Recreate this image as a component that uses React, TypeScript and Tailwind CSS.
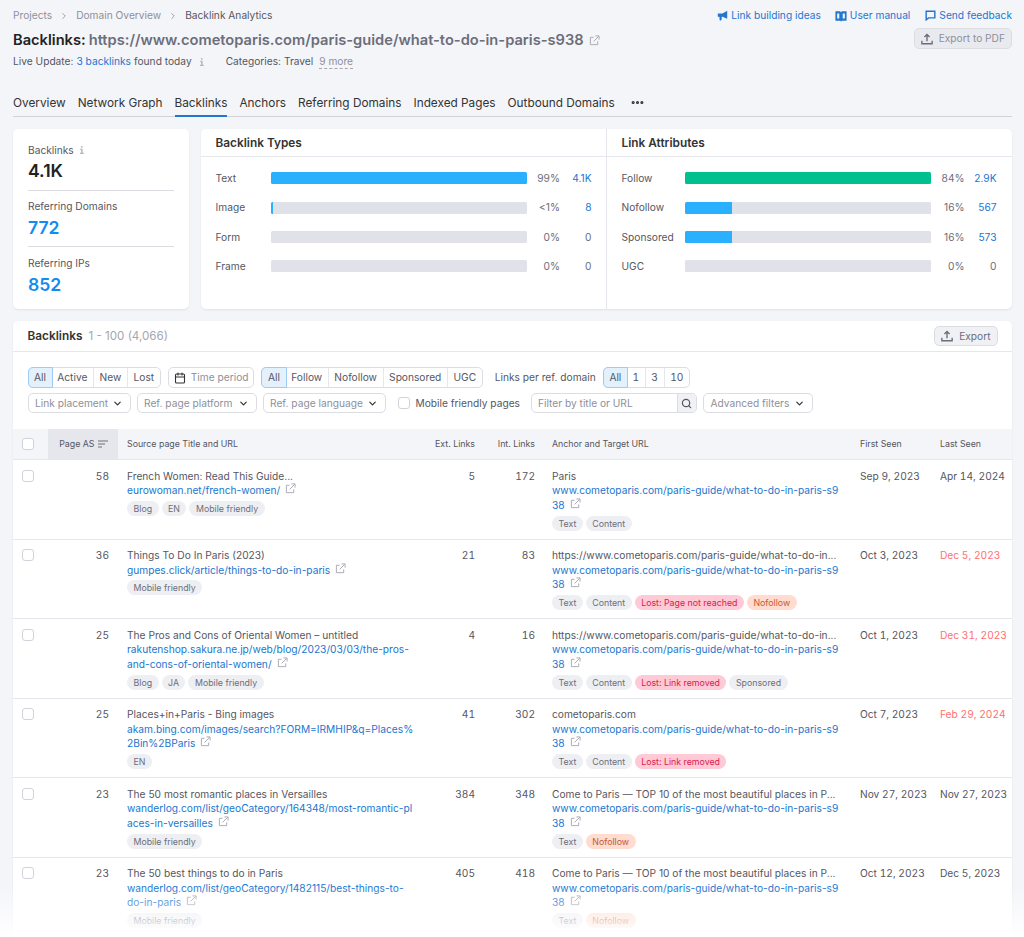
import { ChevronDown, ChevronRight, Calendar, Search, MoreHorizontal } from 'lucide-react';

type Chip = { label: string; tone?: 'gray' | 'red' | 'orange' };
type Row = {
  as: number;
  title: string;
  url: string;
  tags: string[];
  ext: number;
  int: number;
  anchor: string;
  chips: Chip[];
  first: string;
  last: string;
  lostDate?: boolean;
};

const TARGET = 'www.cometoparis.com/paris-guide/what-to-do-in-paris-s9\n38';
const LONG = 'https://www.cometoparis.com/paris-guide/what-to-do-in...';
const TOP = 'Come to Paris — TOP 10 of the most beautiful places in P...';

const rows: Row[] = [
  { as: 58, title: 'French Women: Read This Guide...', url: 'eurowoman.net/french-women/', tags: ['Blog', 'EN', 'Mobile friendly'], ext: 5, int: 172, anchor: 'Paris', chips: [{ label: 'Text' }, { label: 'Content' }], first: 'Sep 9, 2023', last: 'Apr 14, 2024' },
  { as: 36, title: 'Things To Do In Paris (2023)', url: 'gumpes.click/article/things-to-do-in-paris', tags: ['Mobile friendly'], ext: 21, int: 83, anchor: LONG, chips: [{ label: 'Text' }, { label: 'Content' }, { label: 'Lost: Page not reached', tone: 'red' }, { label: 'Nofollow', tone: 'orange' }], first: 'Oct 3, 2023', last: 'Dec 5, 2023', lostDate: true },
  { as: 25, title: 'The Pros and Cons of Oriental Women – untitled', url: 'rakutenshop.sakura.ne.jp/web/blog/2023/03/03/the-pros-\nand-cons-of-oriental-women/', tags: ['Blog', 'JA', 'Mobile friendly'], ext: 4, int: 16, anchor: LONG, chips: [{ label: 'Text' }, { label: 'Content' }, { label: 'Lost: Link removed', tone: 'red' }, { label: 'Sponsored' }], first: 'Oct 1, 2023', last: 'Dec 31, 2023', lostDate: true },
  { as: 25, title: 'Places+in+Paris - Bing images', url: 'akam.bing.com/images/search?FORM=IRMHIP&q=Places%\n2Bin%2BParis', tags: ['EN'], ext: 41, int: 302, anchor: 'cometoparis.com', chips: [{ label: 'Text' }, { label: 'Content' }, { label: 'Lost: Link removed', tone: 'red' }], first: 'Oct 7, 2023', last: 'Feb 29, 2024', lostDate: true },
  { as: 23, title: 'The 50 most romantic places in Versailles', url: 'wanderlog.com/list/geoCategory/164348/most-romantic-pl\naces-in-versailles', tags: ['Mobile friendly'], ext: 384, int: 348, anchor: TOP, chips: [{ label: 'Text' }, { label: 'Nofollow', tone: 'orange' }], first: 'Nov 27, 2023', last: 'Nov 27, 2023' },
  { as: 23, title: 'The 50 best things to do in Paris', url: 'wanderlog.com/list/geoCategory/1482115/best-things-to-\ndo-in-paris', tags: ['Mobile friendly'], ext: 405, int: 418, anchor: TOP, chips: [{ label: 'Text' }, { label: 'Nofollow', tone: 'orange' }], first: 'Oct 12, 2023', last: 'Dec 5, 2023' },
];

const types = [
  { label: 'Text', fill: 100, pct: '99%', count: '4.1K', blue: true },
  { label: 'Image', fill: 1, pct: '<1%', count: '8', blue: true },
  { label: 'Form', fill: 0, pct: '0%', count: '0', blue: false },
  { label: 'Frame', fill: 0, pct: '0%', count: '0', blue: false },
];

const attrs = [
  { label: 'Follow', fill: 100, pct: '84%', count: '2.9K', blue: true, green: true },
  { label: 'Nofollow', fill: 19, pct: '16%', count: '567', blue: true, green: false },
  { label: 'Sponsored', fill: 19, pct: '16%', count: '573', blue: true, green: false },
  { label: 'UGC', fill: 0, pct: '0%', count: '0', blue: false, green: false },
];

function LinkIcon() {
  return (
    <svg viewBox="0 0 12 12" className="inline-block w-[11px] h-[11px] ml-[5px] align-[0px] text-[#a4a6b0]" fill="none" stroke="currentColor" strokeWidth="1">
      <path d="M5 2.5H1.5v8h8V7" />
      <path d="M5 7l5.5-5.5M7 1h4v4" />
    </svg>
  );
}

function InfoIcon() {
  return (
    <svg viewBox="0 0 8 12" className="w-[6px] h-[10px] text-[#b4b6c0]" fill="currentColor">
      <rect x="2.6" y="0.8" width="2.2" height="2" />
      <path d="M1.4 4.4h3.4v5.4h1.6v1.4H1.2V9.8h1.6V5.8H1.4z" />
    </svg>
  );
}

function UploadIcon() {
  return (
    <svg viewBox="0 0 14 14" className="w-[12px] h-[12px] text-[#6c6e79]" fill="none" stroke="currentColor" strokeWidth="1.6">
      <path d="M7 9.5V2M4 4.6L7 1.6l3 3M1 9v3.5h12V9" />
    </svg>
  );
}

function Tag({ chip }: { chip: Chip }) {
  const tone =
    chip.tone === 'red'
      ? 'bg-[#ffc9d5] text-[#d9204f]'
      : chip.tone === 'orange'
        ? 'bg-[#ffdccf] text-[#bf5a35]'
        : 'bg-[#eeeff3] text-[#6c6e79]';
  return <span className={`h-[15px] leading-[15px] rounded-full px-[6.5px] text-[8.8px] whitespace-nowrap ${tone}`}>{chip.label}</span>;
}

function Checkbox({ className = '' }: { className?: string }) {
  return <span className={`block w-[12px] h-[12px] rounded-[3px] border border-[#d1d2db] bg-white ${className}`} />;
}

function Segments({ items }: { items: string[] }) {
  return (
    <div className="flex h-[21px] rounded-[5px] border border-[#dcdde3] bg-white text-[10.2px] text-[#55565f] tabular-nums">
      {items.map((it, i) => (
        <span
          key={it}
          className={
            i === 0
              ? '-m-px h-[21px] leading-[19px] px-[5.6px] rounded-l-[5px] border border-[#9ccbf3] bg-[#e3f1fd] text-[#55565f]'
              : `leading-[19px] px-[5.6px] ${i > 1 ? 'border-l border-[#e6e7ec]' : ''}`
          }
        >
          {it}
        </span>
      ))}
    </div>
  );
}

function Select({ label, width }: { label: string; width: string }) {
  return (
    <div className={`flex items-center justify-between h-[20px] rounded-[5px] border border-[#dcdde3] bg-white px-[6.5px] text-[10.2px] text-[#8e9099] ${width}`}>
      <span className="whitespace-nowrap">{label}</span>
      <ChevronDown size={11} strokeWidth={2.6} className="text-[#333]" />
    </div>
  );
}

function Bars({ title, items, labelWidth, barClass, pctClass, border }: { title: string; items: typeof attrs; labelWidth: string; barClass: string; pctClass: string; border?: boolean }) {
  return (
    <div className={`flex-1 min-w-0 ${border ? 'border-l border-[#e6e7ec]' : ''}`}>
      <div className="h-[28px] leading-[29px] px-[14.5px] border-b border-[#e6e7ec] text-[11.85px] font-semibold text-[#333]">{title}</div>
      <div className="px-[14.5px] pt-[6.5px] flex flex-col">
        {items.map(r => (
          <div key={r.label} className="flex items-center h-[29.4px] text-[10.2px]">
            <span className={`${labelWidth} text-[#55565f]`}>{r.label}</span>
            <div className={`${barClass} shrink-0 h-[12px] rounded-[1.5px] bg-[#e0e1e9] overflow-hidden`}>
              <div className={`h-full ${r.green ? 'bg-[#00c08f]' : 'bg-[#2bafff]'}`} style={{ width: `${r.fill}%` }} />
            </div>
            <span className={`${pctClass} text-right text-[#6c6e79]`}>{r.pct}</span>
            <span className={`w-[32px] text-right ${r.blue ? 'text-[#2176cf]' : 'text-[#6c6e79]'}`}>{r.count}</span>
          </div>
        ))}
      </div>
    </div>
  );
}

const GRID = 'grid grid-cols-[35px_70px_309px_57px_60px_307px_80px_81px]';

export default function App() {
  return (
    <div
      className="relative h-[937px] overflow-hidden bg-[#f4f5f9] text-[#333] text-[10.2px] leading-[14.67px]"
      style={{ fontFamily: 'Inter, "Liberation Sans", sans-serif' }}
    >
      <div className="pl-[13px] pr-[12px]">
        {/* header */}
        <div className="flex justify-between">
          <div className="min-w-0">
            <div className="flex items-center h-[15px] mt-[8px] text-[#6c6e79]">
              <span className="text-[#8e9099]">Projects</span>
              <ChevronRight size={10} className="mx-[7px] text-[#8e9099]" />
              <span className="text-[#8e9099]">Domain Overview</span>
              <ChevronRight size={10} className="mx-[7px] text-[#8e9099]" />
              <span className="text-[#55565f]">Backlink Analytics</span>
            </div>
            <div className="flex items-center h-[22px] mt-[6px] text-[14.67px] font-semibold whitespace-nowrap">
              <span className="text-[#222]">Backlinks:</span>
              <span className="ml-[3px] text-[#6c6e79]">https://www.cometoparis.com/paris-guide/what-to-do-in-paris-s938</span>
              <LinkIcon />
            </div>
            <div className="flex items-center h-[15px] mt-[3px] text-[#55565f]">
              <span>Live Update:</span>
              <span className="ml-[3px] text-[#2176cf]">3 backlinks</span>
              <span className="ml-[3px]">found today</span>
              <span className="ml-[7px]"><InfoIcon /></span>
              <span className="ml-[21px]">Categories: Travel</span>
              <span className="ml-[6px] text-[#8e9099] border-b border-dashed border-[#a4a6b0] leading-[14px]">9 more</span>
            </div>
          </div>
          <div className="flex flex-col items-end shrink-0">
            <div className="flex items-center h-[15px] mt-[8px] text-[#2176cf] whitespace-nowrap">
              <svg viewBox="0 0 14 14" className="w-[11px] h-[11px]" fill="currentColor">
                <path d="M13 1v10L7 8.5H6V12l-1 1.5H3.5L3 8.5H1v-4h6z" />
              </svg>
              <span className="ml-[3px]">Link building ideas</span>
              <svg viewBox="0 0 14 14" className="w-[12px] h-[12px] ml-[14px]">
                <path d="M0.5 1.5h5.5l1 1 1-1h5.5v11H8l-1 1-1-1H0.5z" fill="currentColor" />
                <path d="M2.5 4h2.5v6H2.5zM9 4h2.5v6H9z" fill="#f4f5f9" />
              </svg>
              <span className="ml-[3px]">User manual</span>
              <svg viewBox="0 0 14 14" className="w-[11px] h-[11px] ml-[15px]" fill="none" stroke="currentColor" strokeWidth="1.8">
                <path d="M1.5 1.5h11v8.5H4.5l-3 2.5z" />
              </svg>
              <span className="ml-[3px]">Send feedback</span>
            </div>
            <div className="flex items-center gap-[6px] h-[21px] mt-[5px] px-[6px] rounded-[5px] border border-[#dcdde3] bg-[#e9eaf0] text-[#8e9099]">
              <UploadIcon />
              <span className="whitespace-nowrap">Export to PDF</span>
            </div>
          </div>
        </div>

        {/* tabs */}
        <div className="flex gap-[12px] h-[25px] mt-[23px] border-b border-[#d1d2db] text-[11.8px] text-[#333]">
          {['Overview', 'Network Graph', 'Backlinks', 'Anchors', 'Referring Domains', 'Indexed Pages', 'Outbound Domains'].map(t => (
            <span key={t} className={`h-[25px] leading-[22px] whitespace-nowrap ${t === 'Backlinks' ? 'border-b-2 border-[#2176cf]' : ''}`}>{t}</span>
          ))}
          <MoreHorizontal size={15} strokeWidth={3} className="ml-[3px] mt-[3px] text-[#333]" />
        </div>

        {/* summary cards */}
        <div className="flex gap-[12px] mt-[12px] h-[180px]">
          <div className="w-[176px] shrink-0 rounded-[5px] bg-white shadow-[0_1px_2px_rgba(0,0,0,0.08)] px-[15px] pt-[14px]">
            <div className="flex items-center gap-[5px] text-[#55565f]">Backlinks <InfoIcon /></div>
            <div className="h-[25px] leading-[25px] text-[17.6px] font-semibold text-[#222]">4.1K</div>
            <div className="mt-[7px] border-t border-[#dcdde3] pt-[8px] text-[#55565f]">Referring Domains</div>
            <div className="h-[25px] leading-[30px] text-[17.6px] font-semibold text-[#118df0]">772</div>
            <div className="mt-[8px] border-t border-[#dcdde3] pt-[9px] text-[#55565f]">Referring IPs</div>
            <div className="h-[25px] leading-[28px] text-[17.6px] font-semibold text-[#118df0]">852</div>
          </div>
          <div className="flex flex-1 min-w-0 rounded-[5px] bg-white shadow-[0_1px_2px_rgba(0,0,0,0.08)]">
            <Bars title="Backlink Types" items={types.map(t => ({ ...t, green: false }))} labelWidth="w-[56px]" barClass="w-[256px]" pctClass="w-[33.5px]" />
            <Bars title="Link Attributes" items={attrs} labelWidth="w-[63.5px]" barClass="w-[246px]" pctClass="w-[33.5px]" border />
          </div>
        </div>

        {/* backlinks table */}
        <div className="mt-[12px] rounded-t-[5px] bg-white shadow-[0_1px_2px_rgba(0,0,0,0.08)]">
          <div className="flex items-center justify-between h-[31px] px-[14.5px] border-b border-[#e6e7ec]">
            <div className="flex items-center gap-[6px]">
              <span className="text-[11.85px] font-semibold text-[#333]">Backlinks</span>
              <span className="text-[11.6px] text-[#a4a6b0]">1 - 100 (4,066)</span>
            </div>
            <div className="flex items-center gap-[6px] h-[20px] px-[6px] rounded-[5px] border border-[#dcdde3] bg-[#f0f1f5] text-[#6c6e79]">
              <UploadIcon />
              <span>Export</span>
            </div>
          </div>

          <div className="px-[14.5px] pt-[15px] h-[77px]">
            <div className="flex items-center">
              <Segments items={['All', 'Active', 'New', 'Lost']} />
              <div className="flex items-center gap-[5px] h-[21px] ml-[7px] px-[5px] rounded-[5px] border border-[#dcdde3] text-[#8e9099] whitespace-nowrap">
                <Calendar size={12} strokeWidth={2.2} className="text-[#333]" />
                Time period
              </div>
              <div className="ml-[7px]"><Segments items={['All', 'Follow', 'Nofollow', 'Sponsored', 'UGC']} /></div>
              <span className="ml-[12px] text-[#55565f] whitespace-nowrap">Links per ref. domain</span>
              <div className="ml-[7px]"><Segments items={['All', '1', '3', '10']} /></div>
            </div>
            <div className="flex items-center gap-[6px] mt-[5px]">
              <Select label="Link placement" width="w-[103px]" />
              <Select label="Ref. page platform" width="w-[120px]" />
              <Select label="Ref. page language" width="w-[123px]" />
              <Checkbox className="ml-[6px]" />
              <span className="text-[#55565f] whitespace-nowrap">Mobile friendly pages</span>
              <div className="flex items-center justify-between w-[166px] h-[20px] ml-[5px] rounded-[5px] border border-[#dcdde3] text-[#8e9099]">
                <span className="pl-[6px]">Filter by title or URL</span>
                <span className="flex items-center justify-center w-[19px] h-full rounded-r-[5px] border-l border-[#dcdde3] bg-[#f0f1f5]">
                  <Search size={11} strokeWidth={2.6} className="text-[#55565f]" />
                </span>
              </div>
              <Select label="Advanced filters" width="w-[110px]" />
            </div>
          </div>

          <div className={`${GRID} h-[31px] bg-[#f4f5f9] border-b border-[#e6e7ec] text-[8.8px] text-[#55565f]`}>
            <div className="flex items-center pl-[9px]"><Checkbox /></div>
            <div className="flex items-center justify-end gap-[3px] pr-[10.5px] bg-[#e6e7ec]">
              Page AS
              <svg viewBox="0 0 10 8" className="w-[10px] h-[8px] text-[#6c6e79]" stroke="currentColor" strokeWidth="1">
                <path d="M0 1h10M0 4h7M0 7h4" />
              </svg>
            </div>
            <div className="flex items-center pl-[9px]">Source page Title and URL</div>
            <div className="flex items-center justify-end pr-[9px]">Ext. Links</div>
            <div className="flex items-center justify-end pr-[9px]">Int. Links</div>
            <div className="flex items-center pl-[8px]">Anchor and Target URL</div>
            <div className="flex items-center pl-[9px]">First Seen</div>
            <div className="flex items-center pl-[9px]">Last Seen</div>
          </div>

          {rows.map((r, i) => (
            <div key={i} className={`${GRID} h-[79.5px] pt-[8.5px] border-b border-[#e6e7ec] text-[#55565f]`}>
              <div className="pl-[9px] pt-[1px]"><Checkbox /></div>
              <div className="text-right pr-[9px] tabular-nums">{r.as}</div>
              <div className="pl-[9px] pr-[2px] min-w-0">
                <div className="truncate">{r.title}</div>
                <div className="text-[#2176cf] whitespace-pre-line">{r.url}<LinkIcon /></div>
                <div className="flex gap-[3px] mt-[3px]">
                  {r.tags.map(t => <Tag key={t} chip={{ label: t }} />)}
                </div>
              </div>
              <div className="text-right pr-[9px] tabular-nums">{r.ext}</div>
              <div className="text-right pr-[9px] tabular-nums">{r.int}</div>
              <div className="pl-[8px] pr-[2px] min-w-0">
                <div className="whitespace-nowrap">{r.anchor}</div>
                <div className="text-[#2176cf] whitespace-pre-line">{TARGET}<LinkIcon /></div>
                <div className="flex gap-[3px] mt-[3px]">
                  {r.chips.map(c => <Tag key={c.label} chip={c} />)}
                </div>
              </div>
              <div className="pl-[9px] whitespace-nowrap tabular-nums">{r.first}</div>
              <div className={`pl-[9px] whitespace-nowrap tabular-nums ${r.lostDate ? 'text-[#ff6f6f]' : ''}`}>{r.last}</div>
            </div>
          ))}
        </div>
      </div>

      {/* bottom fade over the last row */}
      <div className="absolute inset-x-0 bottom-0 h-[50px] bg-gradient-to-b from-white/0 to-white pointer-events-none" />
    </div>
  );
}
